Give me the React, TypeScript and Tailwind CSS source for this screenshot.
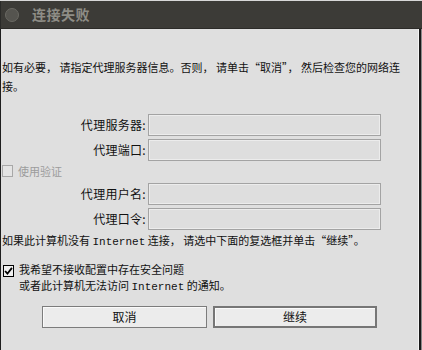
import React from "react";

const cjk = { fontFamily: '"Noto Sans CJK SC", "Noto Sans", sans-serif' };
const mono = { fontFamily: '"Liberation Mono", monospace' };

const inputCls =
  "w-[233px] h-[22px] border border-[#a3a3a3] bg-[#dedede] shadow-[inset_1px_1px_0_#ececec,inset_-1px_-1px_0_#ececec]";

function FieldRow({ label }: { label: string }) {
  return (
    <div className="flex items-center h-[22px]">
      <div className="w-[146px] pr-[2px] text-right text-[12px] tracking-[0.3px] text-[#111]">{label}:</div>
      <div className={inputCls} />
    </div>
  );
}

function CheckMark() {
  return (
    <svg width="10" height="10" viewBox="0 0 10 10">
      <path d="M1.2 5 L3.8 8 L8.8 1.5" fill="none" stroke="#000" strokeWidth="2" />
    </svg>
  );
}

export default function App() {
  return (
    <div className="w-[422px] h-[350px] bg-[#dfdfdf] flex flex-col overflow-hidden" style={cjk}>
      {/* title bar */}
      <div className="h-[1px] bg-[#d8d8d8]" />
      <div className="h-[28px] bg-[#3c3b37] flex items-center border-l border-l-[#2a2a28] border-b border-b-[#2c2b28]">
        <div className="ml-[4px] w-[14px] h-[14px] rounded-full bg-[#55544f] border border-[#6a6963]" />
        <span className="ml-[13px] text-[14px] tracking-[0.5px] text-[#8e8d86] font-bold">连接失败</span>
      </div>

      <div className="flex flex-1">
        <div className="w-[1px] bg-[#1e1e1e]" />
        <div className="flex-1 flex flex-col text-[11px] text-[#111] pl-[1px]">
          <p className="mt-[29px] leading-[19px] whitespace-nowrap">
            如有必要， 请指定代理服务器信息。否则， 请单击“取消”， 然后检查您的网络连
            <br />
            接。
          </p>

          <div className="mt-[18px] flex flex-col gap-[3px]">
            <FieldRow label="代理服务器" />
            <FieldRow label="代理端口" />
          </div>

          <div className="flex items-center h-[20px] text-[#9c9c9c]">
            <div className="w-[11px] h-[12px] border border-[#a8a8a8] bg-[#e4e4e4]" />
            <span className="ml-[5px]">使用验证</span>
          </div>

          <div className="mt-[2px] flex flex-col gap-[3px]">
            <FieldRow label="代理用户名" />
            <FieldRow label="代理口令" />
          </div>

          <p className="mt-[1px] leading-[19px] whitespace-nowrap">
            如果此计算机没有 <span style={mono}>Internet</span> 连接， 请选中下面的复选框并单击“继续”。
          </p>

          <div className="mt-[9px] flex leading-[16px]">
            <div className="mt-[4px] ml-[1px] w-[11px] h-[12px] border border-[#000] bg-[#f0f0f0] flex items-center justify-center">
              <CheckMark />
            </div>
            <div className="ml-[5px] whitespace-nowrap">
              我希望不接收配置中存在安全问题
              <br />
              或者此计算机无法访问 <span style={mono}>Internet</span> 的通知。
            </div>
          </div>

          <div className="mt-[11px] flex gap-[6px] pl-[40px]">
            <button className="w-[165px] h-[22px] border border-[#7c7c7c] bg-[#ececec] shadow-[inset_1px_1px_0_#fafafa] text-[12px] leading-[18px] text-[#111]">
              取消
            </button>
            <button className="w-[164px] h-[22px] border-2 border-[#767676] bg-[#ececec] shadow-[inset_1px_1px_0_#fafafa] text-[12px] leading-[18px] text-[#111]">
              继续
            </button>
          </div>
        </div>
        <div className="w-[1px] bg-[#f4f4f4]" />
        <div className="w-[2px] bg-[#1a1a1a]" />
        <div className="w-[1px] bg-[#8a8a8a]" />
      </div>
    </div>
  );
}
